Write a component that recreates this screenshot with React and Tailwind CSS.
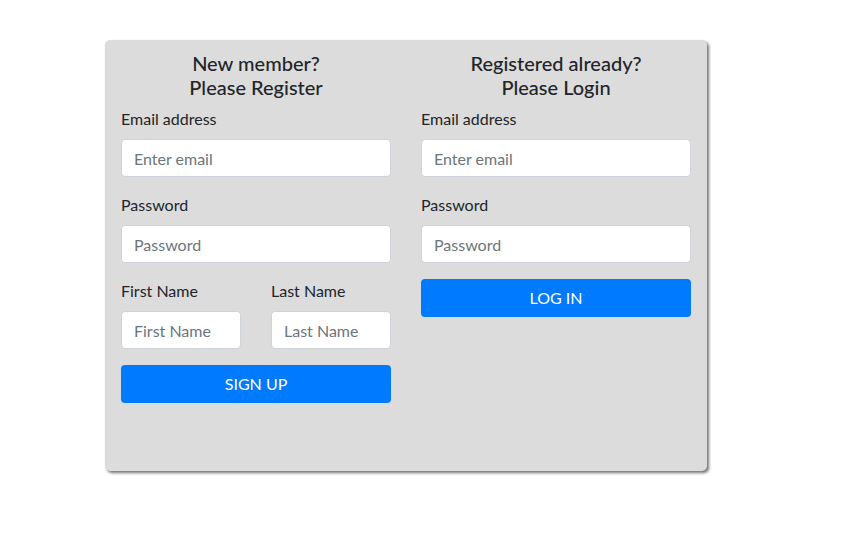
import React from 'react';

const font = { fontFamily: 'Lato, "Liberation Sans", sans-serif' };

const Field = ({ label, placeholder, type = 'text' }) => (
    <div className="mb-4">
        <label className="block text-[16px] leading-6 text-[#212529] mb-2">{label}</label>
        <input
            type={type}
            placeholder={placeholder}
            className="block w-full h-[38px] px-3 bg-white border border-[#ced4da] rounded-[4px] text-[16px] text-[#495057] placeholder:text-[#6c757d] outline-none"
        />
    </div>
);

const App = () => {
    return (
        <div className="min-h-[550px] bg-white pt-[40px] pl-[105px]" style={font}>
            <div className="w-[602px] h-[431px] bg-[#dcdcdc] rounded-[5px] shadow-[2px_2px_3px_rgba(0,0,0,0.55)] px-4 pt-[11px]">
                <div className="grid grid-cols-2 gap-[30px]">
                    {/* register */}
                    <form onSubmit={(e) => e.preventDefault()}>
                        <h5 className="text-center text-[20px] leading-6 font-medium text-[#212529] mb-2">
                            New member?<br />Please Register
                        </h5>
                        <Field label="Email address" placeholder="Enter email" type="email" />
                        <Field label="Password" placeholder="Password" type="password" />
                        <div className="grid grid-cols-2 gap-[30px]">
                            <Field label="First Name" placeholder="First Name" />
                            <Field label="Last Name" placeholder="Last Name" />
                        </div>
                        <button className="w-full h-[38px] bg-[#007bff] text-white text-[16px] rounded-[4px] uppercase">
                            Sign up
                        </button>
                    </form>

                    {/* login */}
                    <form onSubmit={(e) => e.preventDefault()}>
                        <h5 className="text-center text-[20px] leading-6 font-medium text-[#212529] mb-2">
                            Registered already?<br />Please Login
                        </h5>
                        <Field label="Email address" placeholder="Enter email" type="email" />
                        <Field label="Password" placeholder="Password" type="password" />
                        <button className="w-full h-[38px] bg-[#007bff] text-white text-[16px] rounded-[4px] uppercase">
                            Log in
                        </button>
                    </form>
                </div>
            </div>
        </div>
    );
};

export default App;
